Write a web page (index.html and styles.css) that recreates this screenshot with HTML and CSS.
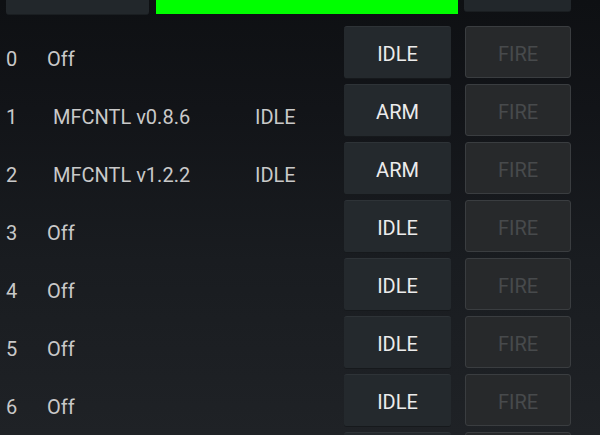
FILE: index.html
```html
<!DOCTYPE html>
<html>
<head>
<meta charset="utf-8">
<link rel="stylesheet" href="styles.css">
</head>
<body>
<div class="screen">
  <div class="topbar">
    <div class="tbtn tbtn-left"></div>
    <div class="meter"></div>
    <div class="tbtn tbtn-right"></div>
  </div>
  <div class="list">
    <div class="row">
      <div class="info"><span class="idx">0</span><span class="name off">Off</span></div>
      <button class="btn act">IDLE</button><button class="btn fire">FIRE</button>
    </div>
    <div class="row">
      <div class="info"><span class="idx">1</span><span class="name dev">MFCNTL v0.8.6</span><span class="state">IDLE</span></div>
      <button class="btn act">ARM</button><button class="btn fire">FIRE</button>
    </div>
    <div class="row">
      <div class="info"><span class="idx">2</span><span class="name dev">MFCNTL v1.2.2</span><span class="state">IDLE</span></div>
      <button class="btn act">ARM</button><button class="btn fire">FIRE</button>
    </div>
    <div class="row">
      <div class="info"><span class="idx">3</span><span class="name off">Off</span></div>
      <button class="btn act">IDLE</button><button class="btn fire">FIRE</button>
    </div>
    <div class="row">
      <div class="info"><span class="idx">4</span><span class="name off">Off</span></div>
      <button class="btn act">IDLE</button><button class="btn fire">FIRE</button>
    </div>
    <div class="row">
      <div class="info"><span class="idx">5</span><span class="name off">Off</span></div>
      <button class="btn act">IDLE</button><button class="btn fire">FIRE</button>
    </div>
    <div class="row">
      <div class="info"><span class="idx">6</span><span class="name off">Off</span></div>
      <button class="btn act">IDLE</button><button class="btn fire">FIRE</button>
    </div>
    <div class="row row-cut">
      <div class="info"></div>
      <button class="btn act"></button><button class="btn fire"></button>
    </div>
  </div>
</div>
</body>
</html>
```

FILE: styles.css
```css
* { box-sizing: border-box; }
html, body {
  margin: 0;
  padding: 0;
  width: 600px;
  height: 435px;
  overflow: hidden;
}
body {
  font-family: Roboto, "Noto Sans", sans-serif;
  background: #0f1114;
}
.screen {
  width: 600px;
  height: 435px;
  overflow: hidden;
  background: linear-gradient(to bottom, #0e1013 0%, #121418 25%, #191c20 60%, #1f2226 100%);
}
.topbar {
  display: flex;
  height: 15px;
  padding-left: 6px;
}
.tbtn {
  background: #22272b;
  border-radius: 0 0 3px 3px;
  border-bottom: 1px solid #1a1e21;
}
.tbtn-left { width: 143px; height: 15px; }
.meter {
  width: 302px;
  height: 14px;
  margin-left: 7px;
  background: #00ff00;
}
.tbtn-right { width: 107px; height: 12px; margin-left: 6px; }
.list {
  display: flex;
  flex-direction: column;
  gap: 5px;
  padding-top: 11px;
}
.row {
  display: flex;
  align-items: stretch;
  height: 53px;
  flex-shrink: 0;
}
.info {
  width: 344px;
  display: flex;
  align-items: center;
  padding-top: 12px;
  font-size: 20px;
  color: #c9c9c9;
}
.idx { width: 47px; padding-left: 6px; }
.name.dev { margin-left: 6px; width: 202px; }
.btn {
  font-family: Roboto, "Noto Sans", sans-serif;
  font-size: 20px;
  height: 53px;
  border-radius: 3px;
  padding: 3px 0 0 0;
  display: flex;
  align-items: center;
  justify-content: center;
}
.act {
  width: 107px;
  background: #24292d;
  color: #ececec;
  border: none;
  border-top: 1px solid #2e3337;
  border-bottom: 1px solid #16191c;
}
.fire {
  width: 106px;
  height: 52px;
  margin-left: 14px;
  background: #27292b;
  color: #474a4c;
  border: 1px solid #3a3d40;
}
```
